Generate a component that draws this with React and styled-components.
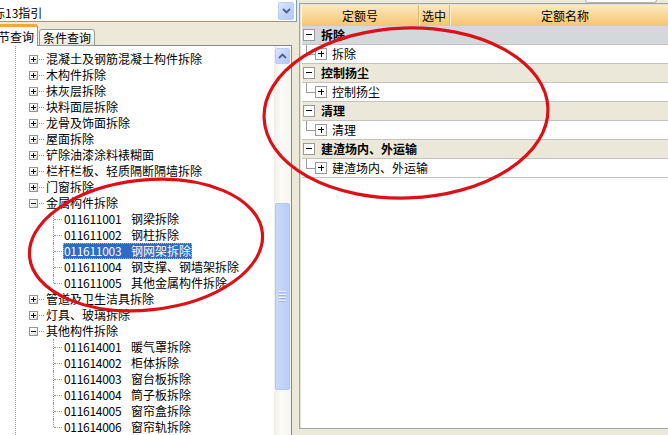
import React from "react";
import styled, { createGlobalStyle } from "styled-components";

const GlobalStyle = createGlobalStyle`
  html, body {
    margin: 0;
    padding: 0;
    background: #ece9d8;
  }
  body {
    font-family: "Noto Sans CJK SC", "Noto Sans", sans-serif;
    font-size: 12px;
    color: #000;
  }
`;

const Screen = styled.div`
  position: relative;
  width: 668px;
  height: 435px;
  overflow: hidden;
  display: flex;
  background: #ece9d8;
`;

/* ---------- left side ---------- */

const LeftPane = styled.div`
  flex: none;
  width: 317px;
  margin-left: -20px;
  display: flex;
  flex-direction: column;
`;

const Combo = styled.div`
  flex: none;
  height: 22px;
  box-sizing: border-box;
  display: flex;
  padding: 0 2px 0 0;
  background: #fff;
  border: 1px solid #7f9db9;
  border-top: none;
`;

const ComboText = styled.div`
  flex: 1;
  padding-top: 5px;
  line-height: 16px;
  white-space: nowrap;
`;

const ScrollButton = styled.div`
  flex: none;
  display: flex;
  align-items: center;
  justify-content: center;
  box-sizing: border-box;
  width: ${(p) => p.w || 15}px;
  height: ${(p) => p.h || 16}px;
  margin-top: ${(p) => p.top || 0}px;
  border: 1px solid #bccdf3;
  border-radius: 2px;
  background: linear-gradient(135deg, #dbe6fd 0%, #c1d3fb 55%, #b4c8f6 100%);
`;

const TabStrip = styled.div`
  flex: none;
  height: 22px;
  margin-top: 2px;
  margin-bottom: -1px;
  padding-left: 2px;
  display: flex;
  align-items: flex-end;
  position: relative;
  z-index: 1;
`;

const Tab = styled.div`
  box-sizing: border-box;
  height: ${(p) => (p.active ? 22 : 17)}px;
  padding: 0 3px;
  margin-right: 1px;
  display: flex;
  align-items: center;
  line-height: 14px;
  white-space: nowrap;
  border: 1px solid #919b9c;
  border-bottom: ${(p) => (p.active ? "none" : "1px solid #919b9c")};
  border-top: ${(p) => (p.active ? "3px solid #f4a83c" : "1px solid #919b9c")};
  border-radius: 3px 3px 0 0;
  background: ${(p) =>
    p.active ? "#fcfcfe" : "linear-gradient(#fefefe, #f0efea 80%, #e4e3dc)"};
  padding-top: ${(p) => (p.active ? 1 : 0)}px;
`;

const TreePanel = styled.div`
  flex: 1;
  min-height: 0;
  margin-right: 5px;
  display: flex;
  background: #fff;
  border: 1px solid #828790;
  border-bottom: none;
`;

const TreeBody = styled.div`
  flex: 1;
  padding-top: 5px;
  background: linear-gradient(to bottom, #9a9a9a 50%, transparent 50%) 34px 0 /
    1px 2px repeat-y;
`;

const Row = styled.div`
  height: 16px;
  display: flex;
  align-items: center;
  white-space: nowrap;
  line-height: 16px;
  padding-left: ${(p) => p.indent}px;
`;

const Expander = styled.span`
  position: relative;
  flex: none;
  box-sizing: border-box;
  width: 9px;
  height: 9px;
  border: 1px solid #8a99a6;
  background: linear-gradient(135deg, #ffffff 30%, #d9d6cb);
  &::before {
    content: "";
    position: absolute;
    left: 1px;
    top: 3px;
    width: 5px;
    height: 1px;
    background: #000;
  }
  &::after {
    content: "";
    position: absolute;
    left: 3px;
    top: 1px;
    width: 1px;
    height: 5px;
    background: #000;
    display: ${(p) => (p.open ? "none" : "block")};
  }
`;

const Stub = styled.span`
  flex: none;
  width: 5px;
  margin: 0 2px 0 1px;
  border-top: 1px dotted #9a9a9a;
`;

const Connector = styled.span`
  position: relative;
  flex: none;
  width: 9px;
  height: 16px;
  margin-right: 1px;
  &::before {
    content: "";
    position: absolute;
    left: 0;
    top: 0;
    height: ${(p) => (p.last ? 8 : 16)}px;
    border-left: 1px dotted #9a9a9a;
  }
  &::after {
    content: "";
    position: absolute;
    left: 1px;
    right: 0;
    top: 8px;
    border-top: 1px dotted #9a9a9a;
  }
`;

const ItemLabel = styled.span`
  display: flex;
  padding: 0 1px;
  height: 16px;
  background: ${(p) => (p.selected ? "#316ac5" : "transparent")};
  color: ${(p) => (p.selected ? "#fff" : "#000")};
  outline: ${(p) => (p.selected ? "1px dotted #9fb8e6" : "none")};
  outline-offset: -1px;
`;

const Code = styled.span`
  width: 67px;
  letter-spacing: -0.3px;
`;

const Scrollbar = styled.div`
  flex: none;
  width: 17px;
  display: flex;
  flex-direction: column;
  align-items: center;
  background: linear-gradient(to right, #f1efe6, #fbfaf6 40%, #f6f5ef);
`;

const Thumb = styled.div`
  flex: none;
  box-sizing: border-box;
  width: 15px;
  height: 187px;
  margin-top: 139px;
  border: 1px solid #b3c6f1;
  border-radius: 2px;
  background: linear-gradient(to right, #c9d8fc, #c3d4fb 50%, #b9cbf7);
  display: flex;
  flex-direction: column;
  align-items: center;
  justify-content: center;
  gap: 1px;
`;

const Grip = styled.span`
  width: 7px;
  height: 1px;
  background: #eef3ff;
  border-bottom: 1px solid #9db5ea;
`;

/* ---------- right side ---------- */

const RightPane = styled.div`
  flex: none;
  width: 390px;
  display: flex;
  flex-direction: column;
`;

const TopStrip = styled.div`
  flex: none;
  height: 3px;
  display: flex;
  justify-content: flex-end;
  padding-right: 30px;
`;

const StripBox = styled.div`
  width: 72px;
  height: 3px;
  box-sizing: border-box;
  background: #fff;
  border: 1px solid #b9b7ab;
  border-top: none;
  border-radius: 0 0 3px 3px;
`;

const Grid = styled.div`
  flex: none;
  height: 426px;
  box-sizing: border-box;
  margin-left: 2px;
  padding: 1px 0 0 2px;
  background: #fff;
  border: 1px solid #9ea4ab;
  box-shadow: inset 1px 1px 0 #e2e0d6;
`;

const Header = styled.div`
  display: flex;
  height: 21px;
  background: linear-gradient(#fde9c2, #f9d594 55%, #f6c46f);
`;

const HeaderCell = styled.div`
  flex: none;
  width: ${(p) => p.w}px;
  display: flex;
  align-items: center;
  justify-content: center;
  line-height: 16px;
  padding-top: 1px;
  border-right: ${(p) => (p.sep ? "1px solid #dcb56f" : "none")};
  box-shadow: ${(p) => (p.sep ? "1px 0 0 #fdf0d3" : "none")};
`;

const GroupRow = styled.div`
  height: 19px;
  box-sizing: border-box;
  display: flex;
  align-items: center;
  padding-left: 1px;
  border-bottom: 1px solid #c3c3bf;
  background: ${(p) => (p.active ? "#d5d8db" : "#ebe8da")};
  font-weight: bold;
  line-height: 16px;
`;

const ChildRow = styled.div`
  height: 19px;
  box-sizing: border-box;
  display: flex;
  align-items: center;
  border-bottom: 1px solid #c3c3bf;
  line-height: 16px;
`;

const Elbow = styled.span`
  position: relative;
  flex: none;
  width: 13px;
  height: 18px;
  &::before {
    content: "";
    position: absolute;
    left: 4px;
    top: 0;
    height: 9px;
    border-left: 1px solid #9a9a9a;
  }
  &::after {
    content: "";
    position: absolute;
    left: 4px;
    width: 9px;
    top: 9px;
    border-top: 1px solid #9a9a9a;
  }
`;

const Box = styled.span`
  position: relative;
  flex: none;
  box-sizing: border-box;
  width: 12px;
  height: 12px;
  margin-right: ${(p) => p.gap}px;
  border: 1px solid #9a9a9a;
  background: #fff;
  &::before {
    content: "";
    position: absolute;
    left: 2px;
    top: 4px;
    width: 6px;
    height: 1px;
    background: #000;
  }
  &::after {
    content: "";
    position: absolute;
    left: 4.5px;
    top: 1.5px;
    width: 1px;
    height: 6px;
    background: #000;
    display: ${(p) => (p.open ? "none" : "block")};
  }
`;

const Overlay = styled.svg`
  position: absolute;
  left: 0;
  top: 0;
  pointer-events: none;
`;

const Chevron = ({ up }) => (
  <svg width="9" height="6" viewBox="0 0 9 6">
    <polyline
      points={up ? "1,5 4.5,1.5 8,5" : "1,1 4.5,4.5 8,1"}
      fill="none"
      stroke="#4d6185"
      strokeWidth="1.8"
    />
  </svg>
);

const tree = [
  { label: "混凝土及钢筋混凝土构件拆除" },
  { label: "木构件拆除" },
  { label: "抹灰层拆除" },
  { label: "块料面层拆除" },
  { label: "龙骨及饰面拆除" },
  { label: "屋面拆除" },
  { label: "铲除油漆涂料裱糊面" },
  { label: "栏杆栏板、轻质隔断隔墙拆除" },
  { label: "门窗拆除" },
  {
    label: "金属构件拆除",
    children: [
      ["011611001", "钢梁拆除"],
      ["011611002", "钢柱拆除"],
      ["011611003", "钢网架拆除"],
      ["011611004", "钢支撑、钢墙架拆除"],
      ["011611005", "其他金属构件拆除"],
    ],
  },
  { label: "管道及卫生洁具拆除" },
  { label: "灯具、玻璃拆除" },
  {
    label: "其他构件拆除",
    children: [
      ["011614001", "暖气罩拆除"],
      ["011614002", "柜体拆除"],
      ["011614003", "窗台板拆除"],
      ["011614004", "筒子板拆除"],
      ["011614005", "窗帘盒拆除"],
      ["011614006", "窗帘轨拆除"],
    ],
  },
];

const groups = ["拆除", "控制扬尘", "清理", "建渣场内、外运输"];

const selectedCode = "011611003";

export default function App() {
  return (
    <Screen>
      <GlobalStyle />
      <LeftPane>
        <Combo>
          <ComboText>国标13指引</ComboText>
          <ScrollButton w={16} h={18} top={2}>
            <Chevron />
          </ScrollButton>
        </Combo>
        <TabStrip>
          <Tab active>章节查询</Tab>
          <Tab>条件查询</Tab>
        </TabStrip>
        <TreePanel>
          <TreeBody>
            {tree.map((node) => (
              <React.Fragment key={node.label}>
                <Row indent={48}>
                  <Expander open={!!node.children} />
                  <Stub />
                  <span>{node.label}</span>
                </Row>
                {node.children &&
                  node.children.map(([code, name], i) => (
                    <Row indent={72} key={code}>
                      <Connector last={i === node.children.length - 1} />
                      <ItemLabel selected={code === selectedCode}>
                        <Code>{code}</Code>
                        <span>{name}</span>
                      </ItemLabel>
                    </Row>
                  ))}
              </React.Fragment>
            ))}
          </TreeBody>
          <Scrollbar>
            <ScrollButton top={2}>
              <Chevron up />
            </ScrollButton>
            <Thumb>
              <Grip />
              <Grip />
              <Grip />
              <Grip />
            </Thumb>
          </Scrollbar>
        </TreePanel>
      </LeftPane>

      <RightPane>
        <TopStrip>
          <StripBox />
        </TopStrip>
        <Grid>
          <Header>
            <HeaderCell w={116} sep>
              定额号
            </HeaderCell>
            <HeaderCell w={30} sep>
              选中
            </HeaderCell>
            <HeaderCell w={230}>定额名称</HeaderCell>
          </Header>
          {groups.map((g, i) => (
            <React.Fragment key={g}>
              <GroupRow active={i === 0}>
                <Box open gap={6} />
                {g}
              </GroupRow>
              <ChildRow>
                <Elbow />
                <Box gap={5} />
                {g}
              </ChildRow>
            </React.Fragment>
          ))}
        </Grid>
      </RightPane>

      <Overlay width="668" height="435" viewBox="0 0 668 435">
        <ellipse
          cx="406"
          cy="113"
          rx="142"
          ry="85"
          fill="none"
          stroke="#dc1118"
          strokeWidth="3.2"
          transform="rotate(-2 406 113)"
        />
        <ellipse
          cx="146"
          cy="245"
          rx="117"
          ry="65"
          fill="none"
          stroke="#dc1118"
          strokeWidth="3.2"
          transform="rotate(-6 146 245)"
        />
      </Overlay>
    </Screen>
  );
}
